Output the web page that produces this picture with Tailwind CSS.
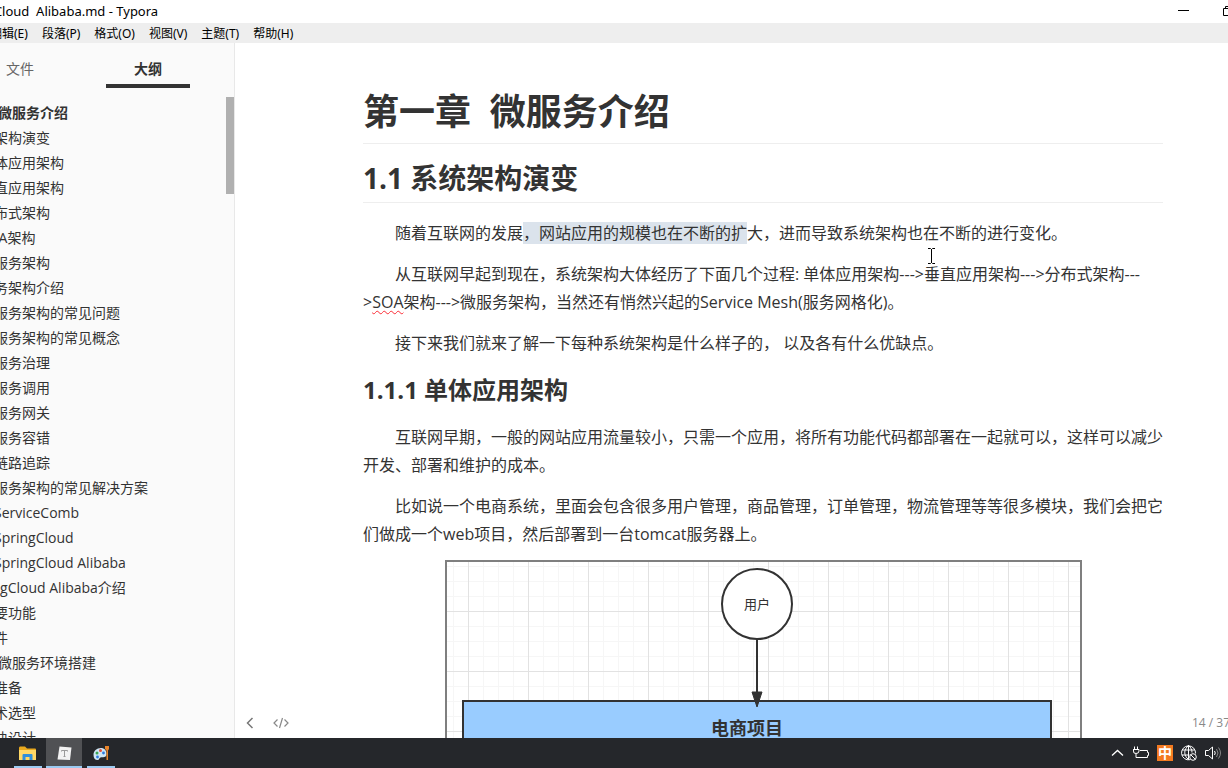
<!DOCTYPE html>
<html lang="zh-CN">
<head>
<meta charset="utf-8">
<title>SpringCloud Alibaba.md - Typora</title>
<script src="https://cdn.jsdelivr.net/npm/@tailwindcss/browser@4"></script>
</head>
<body class="flex h-screen flex-col overflow-hidden bg-white font-['Open_Sans','Noto_Sans_CJK_SC',sans-serif] text-[#333]">

<header class="shrink-0 font-['Noto_Sans','Noto_Sans_CJK_SC',sans-serif] text-xs text-black">
  <div class="flex h-[23px] items-center justify-between overflow-hidden">
    <div class="-ml-[46px] whitespace-pre text-[13px]">SpringCloud  Alibaba.md - Typora</div>
    <div class="-mr-1.5 flex items-center gap-[34px]">
      <button aria-label="最小化" class="flex h-5 w-[11px] items-center"><svg class="h-[11px] w-[11px]" viewBox="0 0 11 11"><path d="M0 4.500H11" stroke="#000"/></svg></button>
      <button aria-label="还原" class="flex h-5 w-[11px] items-center"><svg class="h-[11px] w-[11px]" viewBox="0 0 11 11" fill="none" stroke="#000"><path d="M.5 2.500h8v7h-8zM2.500 2.500v-2h8v7h-2"/></svg></button>
    </div>
  </div>
  <nav aria-label="菜单" class="flex h-5 items-center gap-3.5 overflow-hidden whitespace-nowrap bg-[#eee] pt-0.5">
    <button class="-ml-2.5">编辑(E)</button>
    <button>段落(P)</button>
    <button>格式(O)</button>
    <button>视图(V)</button>
    <button>主题(T)</button>
    <button>帮助(H)</button>
  </nav>
</header>

<div class="flex min-h-0 flex-1">
  <aside class="relative w-[235px] shrink-0 overflow-hidden border-r border-[#e8e8e8] bg-[#fafafa] text-sm">
    <div class="-ml-[22px] flex h-[45px] gap-11">
      <button class="w-[84px] border-b-4 border-transparent pt-2.5 text-[#666]">文件</button>
      <button class="w-[84px] border-b-4 border-[#333] pt-2.5 font-bold">大纲</button>
    </div>
    <nav aria-label="大纲" class="-ml-[60px] mt-3 flex flex-col whitespace-pre leading-[25px]">
      <a href="#c1" class="flex font-bold"><span class="w-[58px] text-right">第一章  </span>微服务介绍</a>
      <a href="#s11" class="flex"><span class="w-[26px] text-right">1.1 </span>系统架构演变</a>
      <a href="#s111" class="flex"><span class="w-10 text-right">1.1.1 </span>单体应用架构</a>
      <a href="#" class="flex"><span class="w-10 text-right">1.1.2 </span>垂直应用架构</a>
      <a href="#" class="flex"><span class="w-10 text-right">1.1.3 </span>分布式架构</a>
      <a href="#" class="flex"><span class="w-10 text-right">1.1.4 </span>SOA架构</a>
      <a href="#" class="flex"><span class="w-10 text-right">1.1.5 </span>微服务架构</a>
      <a href="#" class="flex"><span class="w-[26px] text-right">1.2 </span>微服务架构介绍</a>
      <a href="#" class="flex"><span class="w-10 text-right">1.2.1 </span>微服务架构的常见问题</a>
      <a href="#" class="flex"><span class="w-10 text-right">1.2.2 </span>微服务架构的常见概念</a>
      <a href="#" class="flex"><span class="w-[54px] text-right">1.2.2.1 </span>服务治理</a>
      <a href="#" class="flex"><span class="w-[54px] text-right">1.2.2.2 </span>服务调用</a>
      <a href="#" class="flex"><span class="w-[54px] text-right">1.2.2.3 </span>服务网关</a>
      <a href="#" class="flex"><span class="w-[54px] text-right">1.2.2.4 </span>服务容错</a>
      <a href="#" class="flex"><span class="w-[54px] text-right">1.2.2.5 </span>链路追踪</a>
      <a href="#" class="flex"><span class="w-10 text-right">1.2.3 </span>微服务架构的常见解决方案</a>
      <a href="#" class="flex"><span class="w-[54px] text-right">1.2.3.1 </span>ServiceComb</a>
      <a href="#" class="flex"><span class="w-[54px] text-right">1.2.3.2 </span>SpringCloud</a>
      <a href="#" class="flex"><span class="w-[54px] text-right">1.2.3.3 </span>SpringCloud Alibaba</a>
      <a href="#" class="flex"><span class="w-[26px] text-right">1.3 </span>SpringCloud Alibaba介绍</a>
      <a href="#" class="flex"><span class="w-10 text-right">1.3.1 </span>主要功能</a>
      <a href="#" class="flex"><span class="w-10 text-right">1.3.2 </span>组件</a>
      <a href="#" class="flex"><span class="w-[58px] text-right">第二章  </span>微服务环境搭建</a>
      <a href="#" class="flex"><span class="w-[26px] text-right">2.1 </span>案例准备</a>
      <a href="#" class="flex"><span class="w-10 text-right">2.1.1 </span>技术选型</a>
      <a href="#" class="flex"><span class="w-10 text-right">2.1.2 </span>模块设计</a>
    </nav>
    <div class="absolute right-0 top-[54px] h-[97px] w-2 bg-[#b0b0b0]"></div>
  </aside>

  <main class="relative min-w-0 flex-1 overflow-hidden pl-32 pr-16">
    <article class="w-full max-w-[800px] pt-[47px] text-base leading-7">
      <h1 id="c1" class="whitespace-pre border-b border-[#eee] pb-[9px] text-4xl font-bold leading-[44px]">第一章  微服务介绍</h1>
      <h2 id="s11" class="mt-[17px] border-b border-[#eee] pb-[7px] text-[28px] font-bold leading-[34px]">1.1 系统架构演变</h2>
      <p class="mt-4 indent-8">随着互联网的发展<mark class="bg-[#dbe3ec] text-inherit">，网站应用的规模也在不断的扩</mark>大，进而导致系统架构也在不断的进行变化。</p>
      <p class="mt-[13px] indent-8">从互联网早起到现在，系统架构大体经历了下面几个过程: 单体应用架构---&gt;垂直应用架构---&gt;分布式架构---<br>&gt;<span class="underline decoration-red-500 decoration-wavy decoration-1 underline-offset-2">SOA</span>架构---&gt;微服务架构，当然还有悄然兴起的Service Mesh(服务网格化)。</p>
      <p class="mt-[13px] indent-8">接下来我们就来了解一下每种系统架构是什么样子的， 以及各有什么优缺点。</p>
      <h3 id="s111" class="mt-4 text-2xl font-bold leading-[34px]">1.1.1 单体应用架构</h3>
      <p class="mt-4 indent-8">互联网早期，一般的网站应用流量较小，只需一个应用，将所有功能代码都部署在一起就可以，这样可以减少开发、部署和维护的成本。</p>
      <p class="mt-[13px] indent-8">比如说一个电商系统，里面会包含很多用户管理，商品管理，订单管理，物流管理等等很多模块，我们会把它们做成一个web项目，然后部署到一台tomcat服务器上。</p>
      <figure class="mt-3 flex justify-center">
        <svg class="h-[300px] w-[637px] shrink-0" viewBox="0 0 637 300" role="img" aria-label="单体应用架构图">
          <defs>
            <pattern id="minor" width="15" height="15" x="8" y="6" patternUnits="userSpaceOnUse"><path d="M.5 0V15M0 .5H15" stroke="#f6f6f6"/></pattern>
            <pattern id="major" width="60" height="60" x="23" y="51" patternUnits="userSpaceOnUse"><path d="M.5 0V60M0 .5H60" stroke="#e2e2e2"/></pattern>
          </defs>
          <rect width="637" height="300" fill="#fff"/>
          <rect width="637" height="300" fill="url(#minor)"/>
          <rect width="637" height="300" fill="url(#major)"/>
          <rect x="1" y="1" width="635" height="298" fill="none" stroke="#7f7f7f" stroke-width="2"/>
          <rect x="18" y="141" width="588" height="140" fill="#9cf" stroke="#323232" stroke-width="2"/>
          <circle cx="312" cy="44" r="35" fill="#fff" stroke="#323232" stroke-width="2"/>
          <path d="M312 79V134" stroke="#323232" stroke-width="2"/>
          <path d="M307 132h10l-5 15z" fill="#323232" stroke="#323232"/>
          <text x="312" y="49" text-anchor="middle" font-size="13" fill="#323232">用户</text>
          <text x="302" y="175" text-anchor="middle" font-size="18" font-weight="700" fill="#323232">电商项目</text>
        </svg>
      </figure>
    </article>

    <svg class="absolute left-[692px] top-[205px] h-4 w-[9px]" viewBox="0 0 9 16" fill="none" stroke="#000" aria-hidden="true"><path d="M1 .5h2.500l1 1 1-1H8M1 15.500h2.500l1-1 1 1H8M4.500 1v14"/></svg>

    <div class="absolute inset-x-0 bottom-0 flex h-[30px] items-center text-xs text-[#888]">
      <button aria-label="隐藏侧边栏" class="ml-[11px]"><svg class="h-3 w-2" viewBox="0 0 8 12" fill="none" stroke="#777" stroke-width="1.500"><path d="M6.500 1 1.500 6l5 5"/></svg></button>
      <button aria-label="源代码模式" class="ml-[19px]"><svg class="h-3 w-4" viewBox="0 0 16 12" fill="none" stroke="#888" stroke-width="1.200"><path d="M4.500 2.500 1 6l3.500 3.500M11.500 2.500 15 6l-3.500 3.500M9.500 1l-3 10"/></svg></button>
      <span class="-mr-0.5 ml-auto whitespace-nowrap">14 / 37</span>
    </div>
  </main>
</div>

<footer class="flex h-[30px] shrink-0 items-center justify-between overflow-hidden bg-[#25272b]">
  <div class="flex h-full pl-[9px]">
    <button aria-label="文件资源管理器" class="flex h-full w-[37px] flex-col items-center justify-between pt-2">
      <svg class="h-[15px] w-[17px]" viewBox="0 0 17 15"><path d="M0 2q0-1.500 1-1.500h5L8 2.500h8q1 0 1 1V14H0z" fill="#e9a91f"/><path d="M0 4h17v10H0z" fill="#ffd866"/><path d="M3.500 14V9q0-1 1-1h8q1 0 1 1v5h-3v-3h-4v3z" fill="#2f8fdb"/></svg>
      <span class="h-0.5 w-7 bg-[#9bcbf2]"></span>
    </button>
    <button aria-label="Typora" class="flex h-full w-9 flex-col items-center justify-between bg-[#505154] pt-2">
      <svg class="h-[15px] w-[15px]" viewBox="0 0 15 15"><path d="M2.500.5 14.500 1.500 13 14 .5 13.500z" fill="#f2f2f2"/><path d="M4.500 5.500V4.500h6v1M7.500 4.500v6M6.500 10.500h2" fill="none" stroke="#999"/></svg>
      <span class="h-0.5 w-full bg-[#9bcbf2]"></span>
    </button>
    <button aria-label="画图" class="flex h-full w-[38px] flex-col items-center justify-between pt-[7px]">
      <svg class="h-4 w-[17px]" viewBox="0 0 17 16"><path d="M8 3C3.500 3 .5 6 .5 10c0 3 1.500 5 4 5 2 0 1.500-2 3-2.500 2-.5 6 .5 6-3.500C13.500 5 11 3 8 3z" fill="#cfe6f5"/><circle cx="4" cy="8" r="1.500" fill="#3aa655"/><circle cx="7.500" cy="5.500" r="1.500" fill="#e34f3c"/><circle cx="10.500" cy="8" r="1.400" fill="#2c7be0"/><circle cx="4.500" cy="12" r="1.400" fill="#2c7be0"/><path d="M12 1h4v3l-1 1.500V15h-1.500V5.500L12 4z" fill="#e8832a"/></svg>
      <span class="h-0.5 w-7 bg-[#9bcbf2]"></span>
    </button>
  </div>
  <div class="flex items-center gap-2 pr-[7px]">
    <button aria-label="显示隐藏的图标"><svg class="h-4 w-[14px]" viewBox="0 0 14 16" fill="none" stroke="#fff" stroke-width="1.300"><path d="m1 10.500 5.500-5 5.500 5"/></svg></button>
    <button aria-label="电池"><svg class="h-4 w-4" viewBox="0 0 16 16" fill="none" stroke="#fff"><path d="M7 5.500h7.500v2h1v3h-1v2h-9M1.500 1.500v3M4.500 1.500v3M0 4.500h6v1.500q0 2.500-3 2.500T.5 6V4.500M3 8.500v4h3"/></svg></button>
    <button aria-label="中文输入法" class="flex h-4 w-4 items-center justify-center bg-[#f47a20] text-sm font-bold leading-none text-white">中</button>
    <button aria-label="网络"><svg class="h-4 w-4" viewBox="0 0 16 16" fill="none" stroke="#fff"><path d="M9 14.700A7 7 0 1 1 14.500 8.500M7.500.5c-5 4-5 10 0 14M7.500.5c2.500 2 3.500 4.500 3.500 7M1 5h13M1 10h7.500M7.500.5v14"/><circle cx="12" cy="12" r="3.300" fill="#25272b"/><path d="m9.800 9.800 4.400 4.400"/></svg></button>
    <button aria-label="音量"><svg class="h-4 w-4" viewBox="0 0 16 16" fill="none" stroke="#fff"><path d="M.5 5.500h3l4-3.500v12l-4-3.500h-3z"/><path d="M9.500 6q1.500 2 0 4"/><path d="M11.500 4q3 4 0 8M13.500 2.500q4 5.500 0 11" stroke="#888"/></svg></button>
  </div>
</footer>
</body>
</html>
